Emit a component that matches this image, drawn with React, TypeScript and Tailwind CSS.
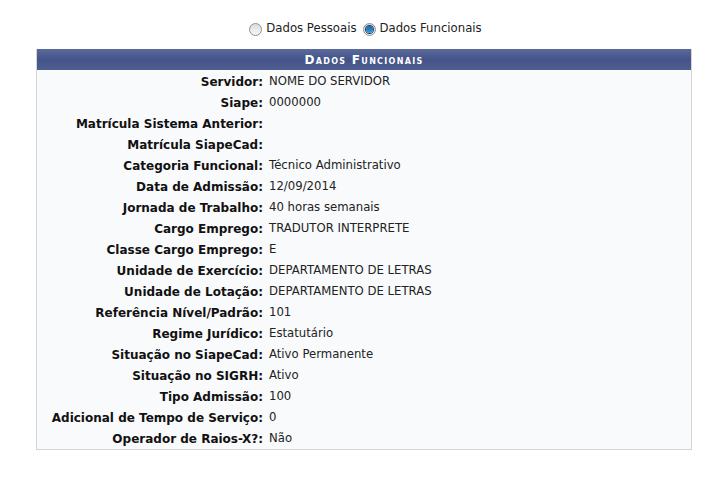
import * as React from 'react';

const rows: [string, string][] = [
  ['Servidor:', 'NOME DO SERVIDOR'],
  ['Siape:', '0000000'],
  ['Matrícula Sistema Anterior:', ''],
  ['Matrícula SiapeCad:', ''],
  ['Categoria Funcional:', 'Técnico Administrativo'],
  ['Data de Admissão:', '12/09/2014'],
  ['Jornada de Trabalho:', '40 horas semanais'],
  ['Cargo Emprego:', 'TRADUTOR INTERPRETE'],
  ['Classe Cargo Emprego:', 'E'],
  ['Unidade de Exercício:', 'DEPARTAMENTO DE LETRAS'],
  ['Unidade de Lotação:', 'DEPARTAMENTO DE LETRAS'],
  ['Referência Nível/Padrão:', '101'],
  ['Regime Jurídico:', 'Estatutário'],
  ['Situação no SiapeCad:', 'Ativo Permanente'],
  ['Situação no SIGRH:', 'Ativo'],
  ['Tipo Admissão:', '100'],
  ['Adicional de Tempo de Serviço:', '0'],
  ['Operador de Raios-X?:', 'Não'],
];

function Radio({ checked, label }: { checked?: boolean; label: string }) {
  return (
    <label className="inline-flex items-center gap-[4px]">
      <span className="grid h-[13px] w-[13px] place-items-center rounded-full border border-[#8f8f8f] bg-gradient-to-b from-[#dcdcdc] to-[#f7f7f7]">
        {checked && (
          <span className="h-[7px] w-[7px] rounded-full bg-gradient-to-b from-[#1c5f9e] to-[#3aa0e0] ring-1 ring-[#0d3c6e]" />
        )}
      </span>
      <span>{label}</span>
    </label>
  );
}

export default function App() {
  return (
    <div className="min-h-[494px] w-[727px] bg-white pt-[21px] font-['DejaVu_Sans',Verdana,sans-serif] text-[11.7px] text-[#222]">
      {/* view switcher */}
      <div className="flex h-[16px] items-center justify-center gap-[6px] pl-[4px]">
        <Radio label="Dados Pessoais" />
        <Radio checked label="Dados Funcionais" />
      </div>

      <div className="ml-[36px] mt-[12px] w-[656px] border border-t-0 border-[#d5d5d5] bg-[#f9fafc]">
        <div className="flex h-[21px] items-center justify-center bg-gradient-to-b from-[#5a6a9a] via-[#44548a] to-[#4e5e90] text-[12px] font-bold tracking-[1.3px] text-white [font-variant:small-caps]">
          Dados Funcionais
        </div>
        <div className="pt-[1px]">
          {rows.map(([k, v]) => (
            <div key={k} className="flex h-[21px] items-center">
              <div className="w-[232px] pr-[6px] text-right text-[12px] font-bold text-[#111]">{k}</div>
              <div className="whitespace-nowrap text-[#222]">{v}</div>
            </div>
          ))}
        </div>
      </div>
    </div>
  );
}
